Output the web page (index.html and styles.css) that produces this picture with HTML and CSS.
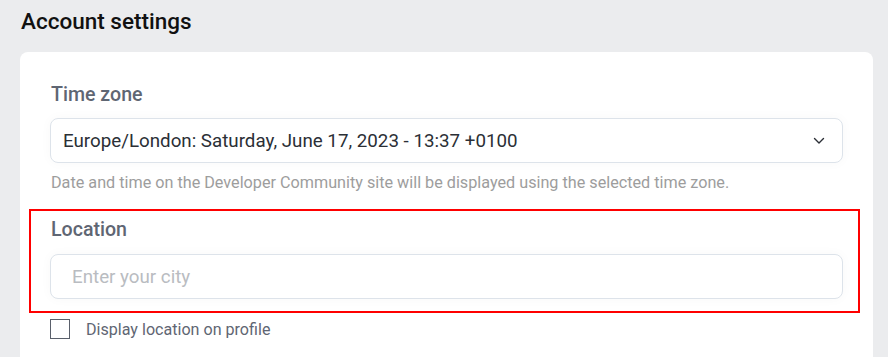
FILE: index.html
```html
<!DOCTYPE html>
<html lang="en">
<head>
  <meta charset="UTF-8">
  <title>Account settings</title>
  <link rel="stylesheet" href="styles.css">
</head>
<body>
  <div class="page">
    <h1>Account settings</h1>

    <div class="card">
      <div class="field">
        <label class="field-label" for="tz">Time zone</label>
        <div class="select">
          <span class="select-value">Europe/London: Saturday, June 17, 2023 - 13:37 +0100</span>
          <svg class="chevron" width="12" height="8" viewBox="0 0 12 8">
            <path d="M1.5 1.5 L6 6 L10.5 1.5" fill="none" stroke="#2b2f36" stroke-width="1.4" stroke-linecap="round" stroke-linejoin="round"/>
          </svg>
        </div>
        <div class="hint">Date and time on the Developer Community site will be displayed using the selected time zone.</div>
      </div>

      <div class="field field-marked">
        <label class="field-label" for="city">Location</label>
        <input class="text-input" id="city" type="text" placeholder="Enter your city">
      </div>

      <label class="check">
        <span class="check-box"></span>
        <span>Display location on profile</span>
      </label>
    </div>
  </div>
</body>
</html>
```

FILE: styles.css
```css
html, body {
  margin: 0;
  padding: 0;
  height: 100%;
  overflow: hidden;
}

body {
  background: #ebecee;
  font-family: Roboto, "Liberation Sans", sans-serif;
  color: #2b2f36;
}

.page {
  padding: 6px 15px 0 20px;
}

h1 {
  font-size: 22.5px;
  font-weight: 500;
  color: #111;
  margin: 0 0 0 1px;
  line-height: 30px;
}

.card {
  margin-top: 16px;
  background: #fff;
  border-radius: 8px;
  padding: 30px 30px 30px;
  box-sizing: border-box;
}

.field-label {
  display: block;
  font-size: 19.6px;
  font-weight: 500;
  color: #5f6673;
  line-height: 26px;
  margin: 0 0 10px 1px;
}

.select {
  display: flex;
  align-items: center;
  justify-content: space-between;
  height: 45px;
  box-sizing: border-box;
  border: 1px solid #dde3ea;
  border-radius: 8px;
  padding: 0 17px 0 12px;
  box-shadow: 0 0 12px rgba(0, 0, 0, 0.03);
}

.select-value {
  font-size: 18.75px;
}

.hint {
  font-size: 16.2px;
  color: #9d9d9d;
  margin: 10px 0 0 1px;
  line-height: 19px;
}

.field-marked {
  margin: 17px -17px 0 -21px;
  padding: 6px 15px 12px 19px;
  border: 2px solid #ff0000;
}

.field-marked .field-label {
  margin-bottom: 11px;
}

.text-input {
  display: block;
  width: 100%;
  height: 45px;
  box-sizing: border-box;
  border: 1px solid #dde3ea;
  border-radius: 8px;
  padding: 0 21px;
  font-family: inherit;
  font-size: 18.75px;
  color: #2b2f36;
  outline: none;
  box-shadow: 0 0 12px rgba(0, 0, 0, 0.03);
}

.text-input::placeholder {
  color: #b9bcc1;
}

.check {
  display: flex;
  align-items: center;
  gap: 16px;
  margin-top: 6px;
  font-size: 16.1px;
  color: #5f6673;
}

.check-box {
  width: 20px;
  height: 20px;
  box-sizing: border-box;
  border: 1px solid #5a606b;
  background: #fff;
}
```
